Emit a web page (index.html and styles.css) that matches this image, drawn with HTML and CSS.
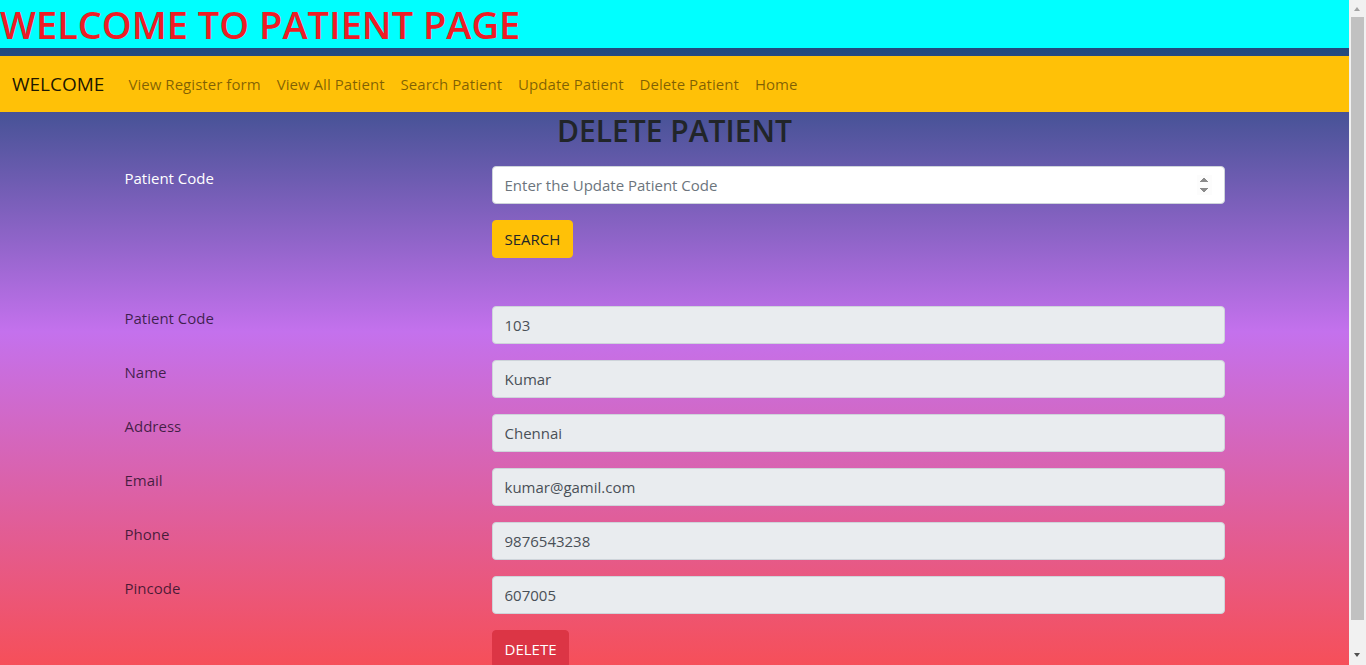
FILE: index.html
```html
<!DOCTYPE html>
<html lang="en">
<head>
<meta charset="utf-8">
<title>Patient Page</title>
<link rel="stylesheet" href="styles.css">
</head>
<body>
<div class="page">
  <header class="banner">
    <h1 class="banner-title">WELCOME TO PATIENT PAGE</h1>
  </header>
  <nav class="navbar">
    <span class="brand">WELCOME</span>
    <a class="nav-link" href="#">View Register form</a>
    <a class="nav-link" href="#">View All Patient</a>
    <a class="nav-link" href="#">Search Patient</a>
    <a class="nav-link" href="#">Update Patient</a>
    <a class="nav-link" href="#">Delete Patient</a>
    <a class="nav-link" href="#">Home</a>
  </nav>
  <main class="content">
    <h2 class="page-title">DELETE PATIENT</h2>
    <form class="form">
      <div class="form-row">
        <label class="form-label light">Patient Code</label>
        <div class="field">
          <input class="input" type="number" placeholder="Enter the Update Patient Code">
          <button class="btn btn-warning" type="button">SEARCH</button>
        </div>
      </div>
      <div class="form-row data-start">
        <label class="form-label">Patient Code</label>
        <div class="field"><input class="input readonly" type="text" value="103" readonly></div>
      </div>
      <div class="form-row">
        <label class="form-label">Name</label>
        <div class="field"><input class="input readonly" type="text" value="Kumar" readonly></div>
      </div>
      <div class="form-row">
        <label class="form-label">Address</label>
        <div class="field"><input class="input readonly" type="text" value="Chennai" readonly></div>
      </div>
      <div class="form-row">
        <label class="form-label">Email</label>
        <div class="field"><input class="input readonly" type="text" value="kumar@gamil.com" readonly></div>
      </div>
      <div class="form-row">
        <label class="form-label">Phone</label>
        <div class="field"><input class="input readonly" type="text" value="9876543238" readonly></div>
      </div>
      <div class="form-row">
        <label class="form-label">Pincode</label>
        <div class="field">
          <input class="input readonly" type="text" value="607005" readonly>
          <button class="btn btn-danger" type="button">DELETE</button>
        </div>
      </div>
    </form>
  </main>
</div>
<div class="scrollbar" aria-hidden="true">
  <span class="sb-arrow sb-up"></span>
  <span class="sb-thumb"></span>
  <span class="sb-arrow sb-down"></span>
</div>
</body>
</html>
```

FILE: styles.css
```css
html, body {
  margin: 0;
  padding: 0;
}

body {
  overflow-x: hidden;
}

.page {
  margin-right: 17px;
  font-family: "Open Sans", "Noto Sans", sans-serif;
  font-size: 15px;
  line-height: 1.5;
  color: #212529;
  background: linear-gradient(to bottom, #07436a 0px, #c471ed 332px, #f64f59 665px, #f64f59 100%);
  min-height: 696px;
  box-sizing: border-box;
  padding-bottom: 28px;
}

.banner {
  background: #00ffff;
  margin-bottom: 8px;
}

.banner-title {
  margin: 0;
  font-size: 38px;
  line-height: 48px;
  font-weight: 600;
  letter-spacing: 0;
  color: #ee1c25;
  white-space: nowrap;
}

.navbar {
  display: flex;
  align-items: center;
  height: 56px;
  box-sizing: border-box;
  padding: 8px 16px 8px 12px;
  background: #ffc107;
}

.brand {
  font-size: 19px;
  line-height: 30px;
  color: rgba(0, 0, 0, 0.9);
  margin-right: 16px;
}

.nav-link {
  padding: 8px;
  color: rgba(0, 0, 0, 0.5);
  text-decoration: none;
  line-height: 24px;
  letter-spacing: 0.05px;
}

.content {
  width: 1100px;
  margin: 0 auto;
}

.page-title {
  margin: 0 0 16px;
  text-align: center;
  font-size: 30px;
  line-height: 38px;
  font-weight: 600;
  color: #212529;
}

.form-row {
  display: grid;
  grid-template-columns: 367px 1fr;
  margin-bottom: 16px;
}

.data-start {
  margin-top: 48px;
}

.form-label {
  color: rgba(25, 10, 35, 0.78);
  line-height: 24px;
  padding-top: 0;
}

.form-label.light {
  color: #ffffff;
}

.field {
  display: flex;
  flex-direction: column;
  align-items: flex-start;
  gap: 16px;
}

.input {
  width: 100%;
  height: 38px;
  box-sizing: border-box;
  padding: 6px 12px;
  font-family: inherit;
  font-size: 15px;
  line-height: 24px;
  color: #495057;
  background: #ffffff;
  border: 1px solid #ced4da;
  border-radius: 4px;
}

.input::placeholder {
  color: #6c757d;
}

.input::-webkit-inner-spin-button {
  opacity: 1;
}

.input.readonly {
  background: #e9ecef;
}

.btn {
  height: 38px;
  box-sizing: border-box;
  padding: 6px 12px;
  font-family: inherit;
  font-size: 15px;
  line-height: 24px;
  border: 1px solid transparent;
  border-radius: 4px;
}

.btn-warning {
  background: #ffc107;
  border-color: #ffc107;
  color: #212529;
}

.btn-danger {
  background: #dc3545;
  border-color: #dc3545;
  color: #ffffff;
}

.scrollbar {
  position: fixed;
  top: 0;
  right: 0;
  width: 17px;
  height: 665px;
  background: #f1f1f1;
}

.sb-thumb {
  position: absolute;
  left: 2px;
  top: 17px;
  width: 13px;
  height: 603px;
  background: #c1c1c1;
}

.sb-arrow {
  position: absolute;
  left: 5px;
  width: 0;
  height: 0;
  border-left: 3.5px solid transparent;
  border-right: 3.5px solid transparent;
}

.sb-up {
  top: 7px;
  border-bottom: 4px solid #a3a3a3;
}

.sb-down {
  bottom: 8px;
  border-top: 4px solid #505050;
}
```
